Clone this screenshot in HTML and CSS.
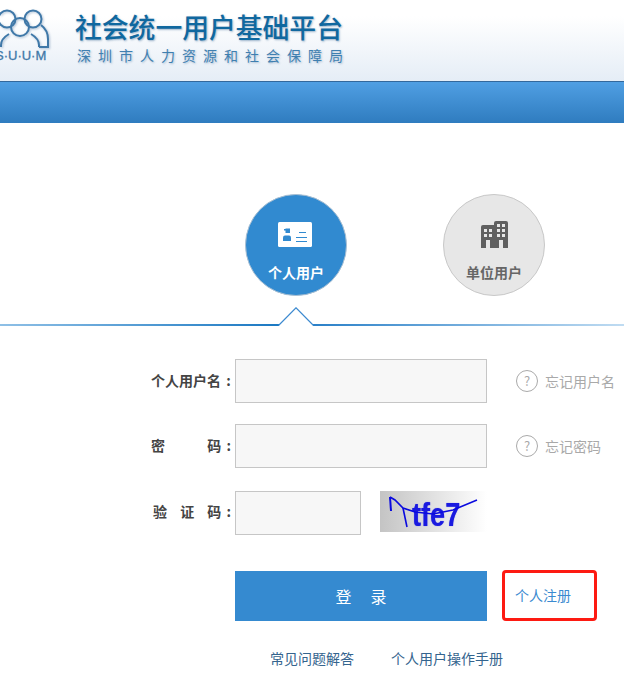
FILE: index.html
```html
<!DOCTYPE html>
<html lang="zh-CN">
<head>
    <meta charset="UTF-8">
    <title>社会统一用户基础平台</title>
    <link rel="stylesheet" href="styles.css">
</head>
<body>
    <div class="page-header">
        <div class="logo">
            <svg class="logo-people" width="50" height="50" viewBox="0 0 50 50" fill="none" stroke="#3f78a8" stroke-width="2">
                <circle cx="7" cy="19" r="8.500"/>
                <circle cx="33" cy="19" r="8.500"/>
                <circle cx="20" cy="27" r="9"/>
                <path d="M41 25c4 3 7 8 7 14v8h-9"/>
                <path d="M1 47v-2c0-5 3-8 8-11M31 34c5 3 8 6 8 11v2"/>
            </svg>
            <div class="logo-text">S·U·U·M</div>
        </div>
        <div class="brand">
            <div class="brand-title">社会统一用户基础平台</div>
            <div class="brand-sub">深圳市人力资源和社会保障局</div>
        </div>
    </div>
    <div class="nav-band"></div>

    <div class="user-tabs">
        <div class="user-tab active">
            <div class="tab-icon icon-card">
                <svg width="34" height="25" viewBox="0 0 34 25">
                    <rect width="34" height="25" rx="1.500" fill="#fff"/>
                    <path d="M6 7h1.500V6.500H12V11H7.500V8.500H6z" fill="#318ad0"/>
                    <path d="M5 19v-3.500q0-2 2-2h4q2 0 2 2V19z" fill="#318ad0"/>
                    <path d="M21 10.500h7M18 15.500h11M18 19.500h11" stroke="#318ad0"/>
                </svg>
            </div>
            <span>个人用户</span>
        </div>
        <div class="user-tab">
            <div class="tab-icon icon-building">
                <svg width="27" height="27" viewBox="0 0 27 27">
                    <path d="M0 6q0-2 2-2h11V2q0-2 2-2h10q2 0 2 2v25h-5v-8h-4v8H9v-8H5v8H0z" fill="#606060"/>
                    <path d="M3 8h3v3H3zM8 8h3v3H8zM3 13h3v3H3zM8 13h3v3H8zM16 3h3v3h-3zM21 3h3v3h-3zM16 8h3v3h-3zM21 8h3v3h-3zM16 13h3v3h-3zM21 13h3v3h-3z" fill="#e7e7e7"/>
                </svg>
            </div>
            <span>单位用户</span>
        </div>
    </div>

    <div class="divider">
        <svg class="divider-arrow" width="36" height="20" viewBox="0 0 36 20">
            <path d="M1 20V18L18 0.800 35 18V20z" fill="#fff"/>
            <path d="M0.500 18.500L18 0.800 35.500 18.500" fill="none" stroke="#3c8ad0" stroke-width="1.200"/>
        </svg>
    </div>

    <div class="login-form">
        <div class="form-row">
            <label class="form-label">个人用户名 :</label>
            <input class="form-input" type="text">
            <a class="help-link"><span class="help-icon">?</span>忘记用户名</a>
        </div>
        <div class="form-row">
            <label class="form-label label-spread">
                <span>密</span><span>码 :</span>
            </label>
            <input class="form-input" type="password">
            <a class="help-link"><span class="help-icon">?</span>忘记密码</a>
        </div>
        <div class="form-row row-code">
            <label class="form-label label-spread label-code">
                <span>验</span><span>证</span><span>码 :</span>
            </label>
            <input class="form-input input-short" type="text">
            <div class="captcha">
                <span class="captcha-text">tfe7</span>
                <svg class="captcha-lines" width="107" height="41" viewBox="0 0 107 41" fill="none" stroke="#0a0adf" stroke-width="1.600">
                    <path d="M10 6l5 3 8 8 12 4 18 2 20-4 24-10"/>
                    <path d="M10 6l1 14" stroke-width="2"/>
                    <path d="M23 17l4 19"/>
                </svg>
            </div>
        </div>
        <div class="action-row">
            <button class="login-btn">登录</button>
            <a class="register-link">个人注册</a>
        </div>
        <div class="foot-links">
            <a>常见问题解答</a>
            <a>个人用户操作手册</a>
        </div>
    </div>
</body>
</html>
```

FILE: styles.css
```css
body {
    margin: 0;
    background: #fff;
    font-family: "Noto Sans CJK SC", "Liberation Sans", sans-serif;
    color: #444;
    overflow: hidden;
}
.page-header {
    height: 81px;
    display: flex;
    background: linear-gradient(#fff, #fff 20%, #e5edf6);
    border-bottom: 1px solid #33689c;
    overflow: hidden;
}
.logo {
    width: 75px;
    flex: none;
    position: relative;
}
.logo-people {
    display: block;
    filter: drop-shadow(1px 1px 1px rgba(40, 90, 140, .35));
}
.logo-text {
    position: absolute;
    left: -5px;
    top: 48px;
    font: 13px/15px "Liberation Sans", sans-serif;
    color: #3f78a8;
    -webkit-text-stroke: .3px #3f78a8;
    white-space: nowrap;
}
.brand {
    padding-top: 9px;
}
.brand-title {
    font-size: 26.800px;
    line-height: 36px;
    color: #10689f;
    font-weight: 500;
    text-shadow: 1px 1px 2px rgba(40, 90, 140, .45);
    white-space: nowrap;
}
.brand-sub {
    margin: -1px 0 0 2px;
    font-size: 14px;
    line-height: 22px;
    color: #3f7fb0;
    letter-spacing: 7px;
    text-shadow: 1px 1px 2px rgba(40, 90, 140, .35);
    white-space: nowrap;
}
.nav-band {
    height: 41px;
    background: linear-gradient(#509fe3, #2f7cbf);
}
.user-tabs {
    display: flex;
    gap: 96px;
    padding: 71px 0 0 245px;
}
.user-tab {
    width: 102px;
    height: 102px;
    box-sizing: border-box;
    border: 1px solid #c8c8c8;
    border-radius: 50%;
    background: #e7e7e7;
    color: #666;
    display: flex;
    flex-direction: column;
    align-items: center;
    font-size: 14px;
    font-weight: bold;
    padding-top: 26px;
}
.tab-icon {
    height: 27px;
    display: flex;
    align-items: center;
}
.icon-card {
    margin-left: -2px;
}
.user-tab span {
    margin-top: 14px;
    line-height: 20px;
}
.user-tab.active {
    background: #318ad0;
    border-color: #a9bfd2;
    color: #fff;
}
.divider {
    position: relative;
    height: 2px;
    margin-top: 28px;
    background: linear-gradient(to right, #8fc0e6, #1a78c2 45%, #2a80c8 50%, #c0dcf2);
}
.divider-arrow {
    position: absolute;
    left: 278px;
    top: -17px;
}
.login-form {
    padding-top: 33px;
}
.form-row {
    display: flex;
    align-items: center;
    height: 44px;
    margin-bottom: 21px;
}
.row-code {
    margin-top: 23px;
    margin-bottom: 35px;
}
.form-label {
    width: 235px;
    padding: 0 4px 0 151px;
    margin-bottom: 2px;
    box-sizing: border-box;
    font-size: 14px;
    font-weight: bold;
    word-spacing: 2px;
    color: #444;
    white-space: nowrap;
}
.label-spread {
    display: flex;
    justify-content: space-between;
}
.label-code {
    padding-left: 153px;
    margin-bottom: 4px;
}
.form-input {
    width: 252px;
    height: 44px;
    box-sizing: border-box;
    margin: 0;
    padding: 0 8px;
    border: 1px solid #c6c6c6;
    background: #f7f7f7;
    outline: none;
}
.input-short {
    width: 126px;
}
.help-link {
    display: flex;
    align-items: center;
    margin-left: 29px;
    font-size: 14px;
    color: #a9a9a9;
    white-space: nowrap;
}
.help-icon {
    width: 22px;
    height: 22px;
    box-sizing: border-box;
    border: 1px solid #aaa;
    border-radius: 50%;
    margin-right: 7px;
    text-align: center;
    font-size: 13px;
    line-height: 19px;
}
.captcha {
    position: relative;
    width: 107px;
    height: 41px;
    margin: -3px 0 0 19px;
    background: linear-gradient(to right, #c4c4c4, #fff);
    overflow: hidden;
}
.captcha-text {
    position: absolute;
    left: 32px;
    top: 6px;
    font: bold 34px/34px "Liberation Sans", sans-serif;
    color: #1a1ae0;
    text-shadow: 0 0 1px #5a5ae0;
    transform: scaleX(.8);
    transform-origin: left center;
}
.captcha-lines {
    position: absolute;
    left: 0;
    top: 0;
}
.action-row {
    display: flex;
    align-items: center;
    margin-left: 235px;
}
.login-btn {
    width: 252px;
    height: 50px;
    border: none;
    background: #358ad0;
    color: #fff;
    font-family: inherit;
    font-size: 16px;
    letter-spacing: 19px;
    text-indent: 19px;
    padding: 0;
}
.register-link {
    width: 95px;
    height: 51px;
    box-sizing: border-box;
    margin-left: 15px;
    padding-left: 10px;
    border: 3px solid #fd1a12;
    border-radius: 4px;
    font-size: 14px;
    line-height: 45px;
    color: #3a8ad0;
}
.foot-links {
    display: flex;
    gap: 37px;
    margin: 27px 0 0 270px;
    font-size: 14px;
    line-height: 20px;
    color: #34648e;
}
```
